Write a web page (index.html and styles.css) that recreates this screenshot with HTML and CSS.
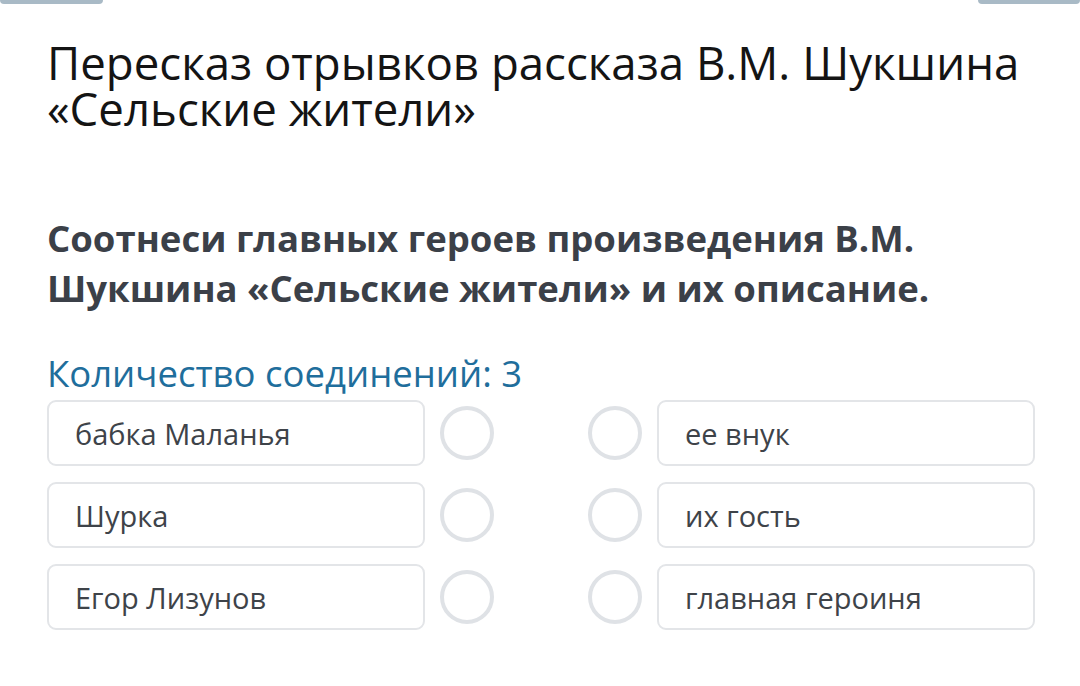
FILE: index.html
```html
<!DOCTYPE html>
<html lang="ru">
<head>
<meta charset="utf-8">
<link rel="stylesheet" href="styles.css">
</head>
<body>
<div class="tabs"><span class="tab"></span><span class="tab"></span></div>
<main class="page">
  <h1 class="title">Пересказ отрывков рассказа В.М. Шукшина «Сельские жители»</h1>
  <h2 class="question">Соотнеси главных героев произведения В.М. Шукшина «Сельские жители» и их описание.</h2>
  <div class="count">Количество соединений: 3</div>
  <div class="rows">
    <div class="row">
      <div class="item">бабка Маланья</div>
      <span class="dot"></span>
      <span class="dot right"></span>
      <div class="item">ее внук</div>
    </div>
    <div class="row">
      <div class="item">Шурка</div>
      <span class="dot"></span>
      <span class="dot right"></span>
      <div class="item">их гость</div>
    </div>
    <div class="row">
      <div class="item">Егор Лизунов</div>
      <span class="dot"></span>
      <span class="dot right"></span>
      <div class="item">главная героиня</div>
    </div>
  </div>
</main>
</body>
</html>
```
FILE: styles.css
```css
* { box-sizing: border-box; }
html, body { margin: 0; padding: 0; background: #fff; }
body { font-family: "Open Sans", "Noto Sans", sans-serif; width: 1080px; height: 686px; overflow: hidden; }
.tabs { display: flex; justify-content: space-between; height: 4px; }
.tab { display: block; width: 103px; height: 4px; background: #a9bac6; border-radius: 0 0 6px 6px; }
.tab:last-child { width: 102px; }
.page { padding-left: 47px; }
.title { margin: 35px 0 0; font-size: 45.6px; line-height: 46px; font-weight: 400; color: #141414; letter-spacing: 0; }
.question { margin: 82px 0 0; font-size: 36.5px; line-height: 50px; font-weight: 700; color: #3b4048; width: 960px; }
.count { margin-top: 38px; font-size: 36.5px; line-height: 44px; color: #1f6e9c; }
.rows { margin-top: 5px; display: flex; flex-direction: column; gap: 16px; }
.row { display: flex; align-items: center; height: 66px; }
.item { width: 378px; height: 66px; border: 2px solid #e3e5e8; border-radius: 9px; padding-left: 26px; display: flex; align-items: center; font-size: 29px; color: #3e4349; }
.dot { width: 54px; height: 54px; border: 4px solid #dfe2e6; border-radius: 50%; margin-left: 15px; }
.dot.right { margin-left: 94px; margin-right: 15px; }
```
